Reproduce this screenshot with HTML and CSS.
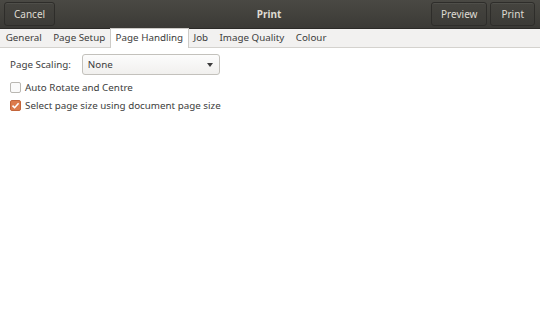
FILE: index.html
```html
<!DOCTYPE html>
<html lang="en">
<head>
  <meta charset="UTF-8">
  <title>Print</title>
  <link rel="stylesheet" href="styles.css">
</head>
<body>
  <div class="window">
    <header class="titlebar">
      <button class="hb-btn">Cancel</button>
      <div class="title">Print</div>
      <div class="hb-right">
        <button class="hb-btn">Preview</button>
        <button class="hb-btn">Print</button>
      </div>
    </header>

    <nav class="tabs">
      <span class="tab">General</span>
      <span class="tab">Page Setup</span>
      <span class="tab active">Page Handling</span>
      <span class="tab">Job</span>
      <span class="tab">Image Quality</span>
      <span class="tab">Colour</span>
    </nav>

    <main class="page">
      <div class="row">
        <label class="lbl">Page Scaling:</label>
        <div class="combo">
          <span>None</span>
          <span class="arrow"></span>
        </div>
      </div>
      <label class="check">
        <span class="box"></span>
        Auto Rotate and Centre
      </label>
      <label class="check">
        <span class="box on">
          <svg width="9" height="9" viewBox="0 0 9 9"><path d="M1.5 4.6 L3.6 6.7 L7.6 2.2" fill="none" stroke="#fff" stroke-width="1.6"/></svg>
        </span>
        Select page size using document page size
      </label>
    </main>
  </div>
</body>
</html>
```

FILE: styles.css
```css
/* Print dialog */
body {
  margin: 0;
  font-family: "Noto Sans", "DejaVu Sans", sans-serif;
  font-size: 9.8px;
  color: #3c3c3c;
  background: #fff;
}

.window {
  width: 540px;
  height: 327px;
  display: flex;
  flex-direction: column;
}

.titlebar {
  height: 29px;
  box-sizing: border-box;
  background: linear-gradient(to bottom, #4a4944, #3b3a36);
  display: flex;
  align-items: center;
  padding: 0 5px 1px 4px;
  border-bottom: 1px solid #2b2a27;
}

.title {
  flex: 1;
  text-align: center;
  color: #dfdbd2;
  font-weight: bold;
  font-size: 10px;
  padding-left: 52px;
}

.hb-right {
  display: flex;
  gap: 3px;
}

.hb-btn {
  font-family: inherit;
  font-size: 10px;
  color: #dfdbd2;
  background: linear-gradient(to bottom, #45443f, #3c3b37);
  border: 1px solid #2e2d2a;
  border-radius: 3px;
  height: 24px;
  padding: 0 10px;
  box-shadow: inset 0 1px 0 rgba(255, 255, 255, 0.06);
}

.hb-btn:first-child {
  padding: 0 9px;
}

.tabs {
  display: flex;
  align-items: flex-end;
  height: 18px;
  background: #f2f1f0;
  border-bottom: 1px solid #d4d2ce;
  padding-left: 0;
}

.tab {
  font-size: 9.8px;
  color: #3c3c3c;
  padding: 2px 5.7px 3px;
  line-height: 13px;
}

.tab.active {
  background: #fff;
  border: 1px solid #cdcbc7;
  border-bottom: none;
  margin: 0 -1px -1px;
  padding: 2px 4.7px 4px;
}

.page {
  padding: 6px 10px;
  display: flex;
  flex-direction: column;
}

.row {
  display: flex;
  align-items: center;
  gap: 11px;
  margin-bottom: 3px;
}

.combo {
  width: 138px;
  height: 21px;
  box-sizing: border-box;
  border: 1px solid #c3c1bc;
  border-radius: 3px;
  background: linear-gradient(to bottom, #fcfcfc, #f1f0ee);
  display: flex;
  align-items: center;
  justify-content: space-between;
  padding: 0 6px 0 5px;
}

.arrow {
  width: 0;
  height: 0;
  border-left: 3.5px solid transparent;
  border-right: 3.5px solid transparent;
  border-top: 4px solid #3c3c3c;
}

.check {
  display: flex;
  align-items: center;
  gap: 4px;
  height: 18px;
}

.box {
  width: 11px;
  height: 11px;
  box-sizing: border-box;
  border: 1px solid #b9b7b2;
  border-radius: 2px;
  background: #fafafa;
  display: flex;
  align-items: center;
  justify-content: center;
}

.box.on {
  background: #dc7b4c;
  border-color: #c3653a;
}
```
